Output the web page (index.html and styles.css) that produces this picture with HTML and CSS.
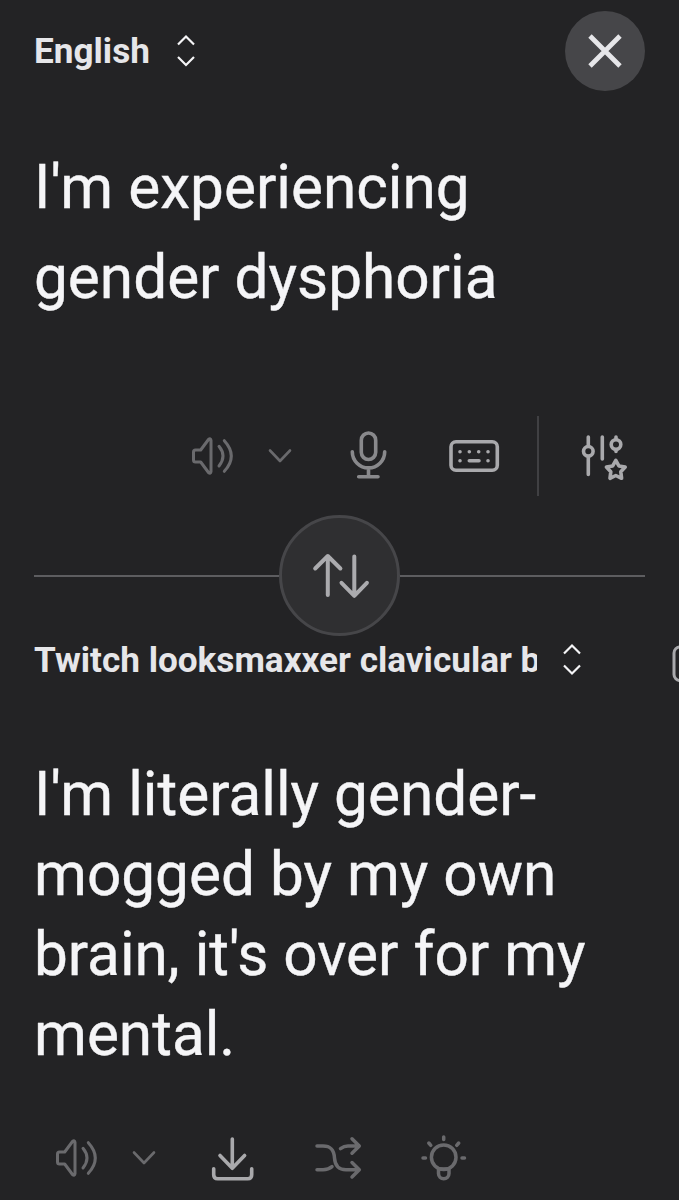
FILE: index.html
```
<!DOCTYPE html>
<html lang="en">
<head>
  <meta charset="UTF-8" />
  <meta name="viewport" content="width=device-width, initial-scale=1.0" />
  <title>Translate</title>
  <link rel="stylesheet" href="styles.css">
</head>
<body>
  <main class="translator">
    <header class="lang-bar">
      <button class="lang-select">
        <span class="lang-name">English</span>
        <svg class="icon-select" viewBox="0 0 20 32"><path d="M2 9.5 10 1.5l8 8M2 22l8 8 8-8" /></svg>
      </button>
      <button class="close-btn" aria-label="Close">
        <svg width="40" height="40" viewBox="0 0 40 40"><path d="M5 5l30 30M35 5 5 35" /></svg>
      </button>
    </header>

    <p class="source-text">I'm experiencing gender dysphoria</p>

    <div class="toolbar source-tools">
      <svg class="icon dim" viewBox="0 0 48 48">
        <path d="M6.5 18h5.2L19.5 7.5q2.2-1.8 2.5 1v31q-.3 2.8-2.5 1L11.7 30H6.5q-2 0-2-2v-8q0-2 2-2zM30 14.3q8 9.7 0 19.7M35.3 8.7q14 15.3 0 30.6" />
      </svg>
      <svg class="icon-chevron dim" viewBox="0 0 24 24"><path d="M2 6.5l10 10.5L22 6.5" /></svg>
      <svg class="icon mic" viewBox="0 0 48 48">
        <rect x="17.3" y="1" width="14.4" height="26.5" rx="7.2" />
        <path d="M8.3 19.7a16.2 16.2 0 0 0 32.4 0M24.5 36v8.5M14.7 44.7H34" />
      </svg>
      <svg class="icon-keyboard" viewBox="0 0 52 52">
        <rect x="3" y="11.8" width="46.3" height="28.5" rx="5" />
        <path d="M12 21.7h.01M21.3 21.7h.01M30.7 21.7h.01M40 21.7h.01M12 30.7h.01M21.3 30.7H31M40 30.7h.01" />
      </svg>
      <span class="divider"></span>
      <svg class="icon" viewBox="0 0 48 48">
        <path d="M7.3 5v9M7.3 24.5v18M21.3 5v22M35 5v2M35 18v1.5" />
        <circle cx="7.3" cy="19.3" r="4.8" />
        <circle cx="35" cy="12.5" r="4.8" />
        <path d="M34.8 28.3l3.1 5.6 6.3 1.2-4.4 4.7.8 6.5-5.8-2.8-5.8 2.8.8-6.5-4.4-4.7 6.3-1.2z" />
      </svg>
    </div>

    <div class="swap-row">
      <button class="swap-btn" aria-label="Swap languages">
        <svg width="60" height="48" viewBox="0 0 60 48">
          <path d="M17.800 43V4M5.200 16.500l12.600-12.500 12.600 12.500M44.300 4.500v39.300M31.500 30.800l12.800 13 12.600-13" />
        </svg>
      </button>
    </div>

    <div class="lang-bar target-bar">
      <button class="lang-select">
        <span class="lang-name">Twitch looksmaxxer clavicular brainrot</span>
        <svg class="icon-select" viewBox="0 0 20 32"><path d="M2 9.5 10 1.5l8 8M2 21.5l8 8 8-8" /></svg>
      </button>
      <svg class="icon-more" viewBox="0 0 40 40"><rect x="2" y="2" width="36" height="33.5" rx="6" /></svg>
    </div>

    <p class="target-text">I'm literally gender-mogged by my own brain, it's over for my mental.</p>

    <div class="toolbar target-tools">
      <svg class="icon dim" viewBox="0 0 48 48">
        <path d="M6.5 18h5.2L19.5 7.5q2.2-1.8 2.5 1v31q-.3 2.8-2.5 1L11.7 30H6.5q-2 0-2-2v-8q0-2 2-2zM30 14.3q8 9.7 0 19.7M35.3 8.7q14 15.3 0 30.6" />
      </svg>
      <svg class="icon-chevron dim" viewBox="0 0 24 24"><path d="M2 6.5l10 10.5L22 6.5" /></svg>
      <svg class="icon" viewBox="0 0 48 48">
        <path d="M24.3 5v29M12 21.5l12.3 12.8 12.3-12.8M5.7 34.7v6q0 4 4 4h30q4 0 4-4v-6" />
      </svg>
      <svg class="icon dim heavy" viewBox="0 0 48 48">
        <path d="M3 12h6C17 12 20 16 20.5 24S25 35.7 32 35.7h13M38 28.5l7.3 7.2-7.3 7.2M26.5 14.7Q30 12 34 12h11M38 4.8l7.3 7.2-7.3 7.2M3 35.7h6q5.5 0 9-3" />
      </svg>
      <svg class="icon dim heavy" viewBox="0 0 48 48">
        <circle cx="23.7" cy="23.3" r="12.3" />
        <path d="M18.5 35H29v4.500a5.250 5.250 0 0 1-10.500 0zM23.700 3v2.500M3 24h2.500M42 24h2.500M8.800 9l2 2.300M38.700 9l-2 2.300" />
      </svg>
    </div>
  </main>
</body>
</html>
```
FILE: styles.css
```
* {
  box-sizing: border-box;
}

body {
  margin: 0;
  background: #232325;
  color: #f5f5f7;
  font-family: Roboto, sans-serif;
}

button {
  padding: 0;
  border: none;
  background: none;
  color: inherit;
  font-family: inherit;
  cursor: pointer;
}

svg {
  display: block;
  flex: none;
  overflow: visible;
  fill: none;
  stroke: currentColor;
  stroke-linecap: round;
  stroke-linejoin: round;
}

.translator {
  height: 1200px;
  padding: 0 34px;
  overflow: hidden;
}

.lang-bar {
  display: flex;
  align-items: center;
  justify-content: space-between;
  height: 102px;
}

.lang-select {
  display: flex;
  align-items: center;
  gap: 26px;
}

.lang-name {
  max-width: 503px;
  overflow: hidden;
  white-space: nowrap;
  font-size: 35.15px;
  font-weight: 700;
  line-height: 46px;
  color: #e6e6e9;
}

.icon-select {
  width: 20px;
  height: 32px;
  stroke-width: 2.2;
  stroke-linecap: butt;
  stroke-linejoin: miter;
}

.close-btn {
  display: flex;
  align-items: center;
  justify-content: center;
  width: 80px;
  height: 80px;
  border-radius: 50%;
  background: #464649;
  color: #e6e6e9;
}

.close-btn svg {
  stroke-width: 4.8;
  stroke-linecap: butt;
}

.source-text,
.target-text {
  margin: 0;
  font-size: 60.3px;
  -webkit-text-stroke: 0.4px currentColor;
}

.source-text {
  padding-top: 41px;
  line-height: 90px;
}

.toolbar {
  display: flex;
  align-items: center;
  height: 80px;
  color: #a9a9ac;
}

.source-tools {
  margin-top: 93px;
  padding-left: 155px;
}

.icon {
  width: 48px;
  height: 48px;
  stroke-width: 3.6;
}

.icon-chevron {
  width: 24px;
  height: 24px;
  margin: 0 52px 0 31px;
  stroke-width: 2.6;
}

.dim {
  color: #6a6a6d;
}

.icon.dim {
  stroke-width: 3;
}

.icon.heavy {
  stroke-width: 3.5;
}

.mic {
  color: #89898c;
}

.icon-keyboard {
  width: 52px;
  height: 52px;
  margin-left: 56px;
  stroke-width: 3.6;
}

.divider {
  width: 2px;
  height: 80px;
  margin: 0 42px 0 37px;
  background: #404043;
}

.swap-row {
  display: flex;
  align-items: center;
  margin-top: 19px;
}

.swap-row::before,
.swap-row::after {
  content: "";
  flex: 1;
  height: 2px;
  background: #5d5d60;
}

.swap-btn {
  display: flex;
  align-items: center;
  justify-content: center;
  width: 121px;
  height: 121px;
  border: 3px solid #464649;
  border-radius: 50%;
  background: #2f2f31;
  color: #ababae;
}

.swap-btn svg {
  stroke-width: 4;
}

.target-bar {
  justify-content: flex-start;
  height: 48px;
}

.target-bar .lang-select {
  gap: 25px;
}

.icon-more {
  width: 40px;
  height: 40px;
  margin: 9px 0 0 90px;
  color: #a9a9ac;
  stroke-width: 3;
}

.target-text {
  padding-top: 71px;
  line-height: 80px;
}

.target-tools {
  margin-top: 43px;
  padding-left: 19px;
}

.target-tools .icon {
  margin-right: 58px;
}

.target-tools .icon:first-child {
  margin-right: 0;
}
```
